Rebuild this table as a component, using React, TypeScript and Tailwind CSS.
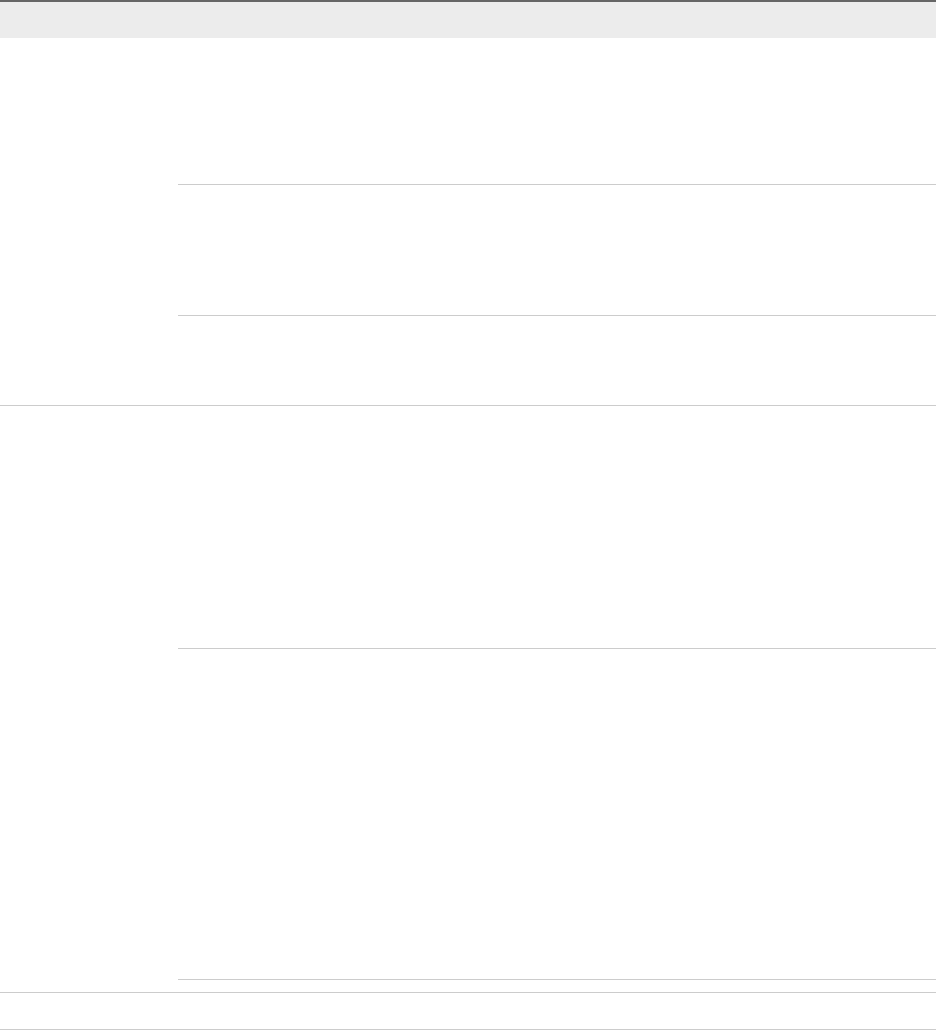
export default function App() {
  return (
    <div className="w-[936px] bg-white font-['Liberation_Sans',sans-serif]">
      {/* header */}
      <div className="h-[38px] border-t-2 border-[#666666] bg-[#ececec]" />

      {/* row 1 */}
      <div className="flex h-[368px] border-b border-[#cccccc]">
        <div className="w-[178px] shrink-0" />
        <div className="flex flex-1 flex-col">
          <div className="h-[147px] border-b border-[#cccccc]" />
          <div className="h-[131px] border-b border-[#cccccc]" />
          <div className="flex-1" />
        </div>
      </div>

      {/* row 2 */}
      <div className="flex h-[587px] border-b border-[#cccccc]">
        <div className="w-[178px] shrink-0" />
        <div className="flex flex-1 flex-col">
          <div className="h-[243px] border-b border-[#cccccc]" />
          <div className="h-[331px] border-b border-[#cccccc]" />
          <div className="flex-1" />
        </div>
      </div>

      {/* row 3 */}
      <div className="h-[37px] border-b border-[#cccccc]" />
    </div>
  );
}
